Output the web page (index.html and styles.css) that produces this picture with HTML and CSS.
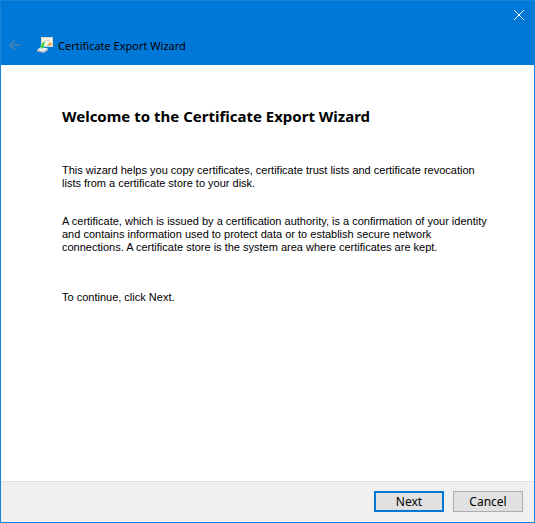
FILE: index.html
```html
<!DOCTYPE html>
<html lang="en">
  <head>
    <meta charset="UTF-8" />
    <meta name="viewport" content="width=device-width, initial-scale=1" />
    <title>Certificate Export Wizard</title>
    <link rel="stylesheet" href="styles.css">
  </head>
  <body>
    <div class="window">
      <header>
        <div class="caption">
          <button class="close" type="button" aria-label="Close">
            <svg width="12" height="12" viewBox="0 0 12 12">
              <path d="M1 1 L11 11 M11 1 L1 11" />
            </svg>
          </button>
        </div>
        <div class="title-bar">
          <button class="back" type="button" aria-label="Back" disabled>
            <svg width="12" height="12" viewBox="0 0 12 12">
              <path d="M12 6 H1 M6 1 L1 6 L6 11" />
            </svg>
          </button>
          <svg class="cert-icon" width="17" height="16" viewBox="0 0 17 16">
            <!-- Certificate -->
            <rect x="4" y="0" width="12" height="10" fill="#ddd9c8" />
            <rect x="5" y="1" width="10" height="8" fill="#f6f3e8" />
            <path d="M8 3.5 H13" stroke="#dedcd2" />
            <path d="M11 7 L10 9 H12 Z" fill="#7a9cae" />
            <circle cx="13" cy="7" r="1.600" fill="#e8a020" />
            <!-- Disk -->
            <path d="M0 13 L4 10 L11 11.500 L7 15 Z" fill="#eceff1" />
            <path d="M0 13 L7 14.500 L11 11.500 V13 L7 16 L0 14.500 Z" fill="#b3bbc1" />
            <!-- Arrow -->
            <path d="M8 4 L5 6 L4.500 8.500 H3 L4.500 12 L8.500 9 H7 L7.500 6 Z" fill="#43cf4b" />
          </svg>
          <span>Certificate Export Wizard</span>
        </div>
      </header>

      <main>
        <h1>Welcome to the Certificate Export Wizard</h1>
        <p>
          This wizard helps you copy certificates, certificate trust lists and
          certificate revocation<br />
          lists from a certificate store to your disk.
        </p>
        <p>
          A certificate, which is issued by a certification authority, is a
          confirmation of your identity<br />
          and contains information used to protect data or to establish secure
          network<br />
          connections. A certificate store is the system area where certificates
          are kept.
        </p>
        <p class="hint">To continue, click Next.</p>
      </main>

      <footer>
        <button class="btn btn-default" type="button">Next</button>
        <button class="btn" type="button">Cancel</button>
      </footer>
    </div>
  </body>
</html>
```
FILE: styles.css
```css
:root {
  --accent: #0078d7;
  --frame: #1883d7;
  --face: #f0f0f0;
  --ui-font: "Noto Sans", "Open Sans", sans-serif;
}

* {
  box-sizing: border-box;
  margin: 0;
  padding: 0;
}

body {
  font-family: Tahoma, "Liberation Sans", sans-serif;
  font-size: 11px;
  line-height: 13px;
  background: #fff;
  color: #000;
}

.window {
  display: flex;
  flex-direction: column;
  min-height: 100vh;
  border: 1px solid var(--frame);
}

/* Header */
header {
  background: var(--accent);
}

.caption {
  display: flex;
  justify-content: flex-end;
  height: 28px;
}

.close {
  display: flex;
  align-items: center;
  justify-content: center;
  width: 30px;
  background: none;
  border: none;
}

.close svg {
  fill: none;
  stroke: #fff;
}

.title-bar {
  display: flex;
  align-items: center;
  height: 36px;
  padding: 0 8px 4px;
  font-family: var(--ui-font);
}

.back {
  display: flex;
  margin-right: 16px;
  background: none;
  border: none;
}

.back svg {
  fill: none;
  stroke: #3a7fb8;
  stroke-width: 2;
}

.cert-icon {
  margin-right: 4px;
}

/* Page */
main {
  flex: 1;
  padding: 40px 40px 40px 61px;
}

h1 {
  margin-bottom: 37px;
  font-family: var(--ui-font);
  font-size: 15px;
  line-height: 22px;
}

p {
  margin-bottom: 25px;
}

.hint {
  padding-top: 12px;
}

/* Buttons */
footer {
  display: flex;
  justify-content: flex-end;
  gap: 9px;
  padding: 9px 11px 10px;
  background: var(--face);
  border-top: 1px solid #dfdfdf;
}

.btn {
  width: 70px;
  height: 21px;
  background: #e1e1e1;
  border: 1px solid #adadad;
  font-family: var(--ui-font);
  font-size: 12px;
  line-height: 16px;
}

.btn-default {
  border: 2px solid var(--accent);
}
```
